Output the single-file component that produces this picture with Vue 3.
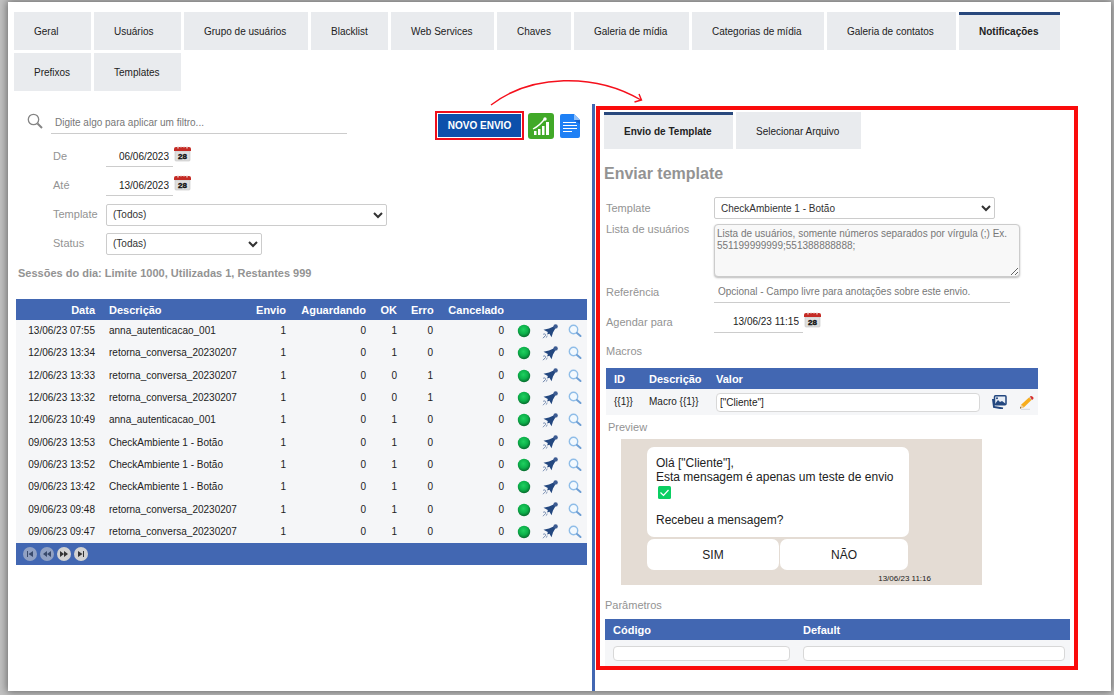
<script setup>
import { ref } from 'vue'

const tabs = [
  'Geral', 'Usuários', 'Grupo de usuários', 'Blacklist', 'Web Services', 'Chaves',
  'Galeria de mídia', 'Categorias de mídia', 'Galeria de contatos', 'Notificações',
  'Prefixos', 'Templates'
]
const activeTab = ref('Notificações')

const panelTabs = ['Envio de Template', 'Selecionar Arquivo']
const activePanelTab = ref('Envio de Template')

const filter = ref('')
const from = ref('06/06/2023')
const to = ref('13/06/2023')
const schedule = ref('13/06/23 11:15')
const macroValue = ref('["Cliente"]')
const macroId = '{{1}}'

const sessions = [
  ['13/06/23 07:55', 'anna_autenticacao_001', 1, 0, 1, 0, 0],
  ['12/06/23 13:34', 'retorna_conversa_20230207', 1, 0, 1, 0, 0],
  ['12/06/23 13:33', 'retorna_conversa_20230207', 1, 0, 0, 1, 0],
  ['12/06/23 13:32', 'retorna_conversa_20230207', 1, 0, 0, 1, 0],
  ['12/06/23 10:49', 'anna_autenticacao_001', 1, 0, 1, 0, 0],
  ['09/06/23 13:53', 'CheckAmbiente 1 - Botão', 1, 0, 1, 0, 0],
  ['09/06/23 13:52', 'CheckAmbiente 1 - Botão', 1, 0, 1, 0, 0],
  ['09/06/23 13:42', 'CheckAmbiente 1 - Botão', 1, 0, 1, 0, 0],
  ['09/06/23 09:48', 'retorna_conversa_20230207', 1, 0, 1, 0, 0],
  ['09/06/23 09:47', 'retorna_conversa_20230207', 1, 0, 1, 0, 0]
]

const pager = [
  { label: 'Primeira página', d: 'M4 4h1v6H4zM10 4v6L5.500 7z', off: true },
  { label: 'Página anterior', d: 'M7 4v6L3 7zM11 4v6L7 7z', off: true },
  { label: 'Próxima página', d: 'M3 4v6l4-3zM7 4v6l4-3z', off: false },
  { label: 'Última página', d: 'M4 4v6l4.500-3zM9 4h1v6H9z', off: false }
]
</script>

<template>
  <div class="page">
    <svg class="defs" width="0" height="0" aria-hidden="true">
      <defs>
        <radialGradient id="led" cx="45%" cy="38%" r="60%">
          <stop offset="0" stop-color="#20d060" /><stop offset="0.6" stop-color="#0cb04a" /><stop offset="1" stop-color="#087030" />
        </radialGradient>
        <symbol id="cal" viewBox="0 0 17 16">
          <path d="M1 5h15v9a1 1 0 0 1-1 1H2a1 1 0 0 1-1-1z" fill="#dedede" stroke="#c4c4c4" stroke-width=".6" />
          <path d="M0 5V3a2 2 0 0 1 2-2h13a2 2 0 0 1 2 2v2z" fill="#c52b25" />
          <path d="M4 .5v2M7 .5v1M10 .5v1M13 .5v2" stroke="#e8c8c4" stroke-width="1.4" />
          <text x="8.500" y="13" text-anchor="middle" font-family="Liberation Sans, sans-serif" font-size="8" font-weight="700" fill="#111" stroke="#111" stroke-width=".4">28</text>
        </symbol>
        <symbol id="rocket" viewBox="0 0 16 15">
          <path d="M1.500 5.800 7 4.500 12.200 2.300 13.700 3.800 11 8.500 9.500 13.200 7.500 9.800 5.200 10.500 5.800 8z" fill="#23477f" />
          <path d="m11 5 2-2" stroke="#23477f" stroke-width="2" />
          <circle cx="13.600" cy="2.400" r="2.200" fill="#3d5c92" />
          <path d="M1.200 10.300c1.500-1 3.300.2 2.200 1.500S1.600 13 1 14.200M5.500 12l-1.600 1.500" fill="none" stroke="#6b83aa" stroke-width="1" />
        </symbol>
        <symbol id="lens" viewBox="0 0 14 14">
          <circle cx="5.500" cy="5.500" r="4.200" fill="#f3f9fe" stroke="#8fbde8" stroke-width="1.400" />
          <path d="m9 9 3.500 3" stroke="#6f9fd4" stroke-width="2" stroke-linecap="round" />
        </symbol>
      </defs>
    </svg>

    <main class="sheet">
      <nav class="tabs" aria-label="Seções">
        <button v-for="t in tabs" :key="t" type="button" class="tab" :class="{ active: t === activeTab }" @click="activeTab = t">{{ t }}</button>
      </nav>

      <div class="columns">
        <section class="left">
          <div class="toolbar">
            <label class="search" for="filter" aria-label="Filtro">
              <svg width="17" height="17" viewBox="0 0 17 17" fill="none" stroke="#858585">
                <circle cx="6.500" cy="6.500" r="5.200" stroke-width="1.300" /><path d="m10.500 10.500 4.500 4.500" stroke-width="2" />
              </svg>
            </label>
            <input id="filter" v-model="filter" class="line filter" type="text" placeholder="Digite algo para aplicar um filtro...">
            <button type="button" class="new">NOVO ENVIO</button>
            <button type="button" class="icon" aria-label="Estatísticas">
              <svg width="26" height="26" viewBox="0 0 26 26">
                <rect width="26" height="26" rx="3" fill="#41a928" />
                <path d="M6 18h2.500v4H6zM10 16h2.500v6H10zM14 13h2.500v9H14zM18 9h3v13h-3z" fill="#fff" />
                <path d="M5 16C9 14 13 11 17 5.500" fill="none" stroke="#fff" stroke-width="1.300" /><circle cx="17" cy="6" r="1.700" fill="#fff" />
              </svg>
            </button>
            <button type="button" class="icon" aria-label="Relatório">
              <svg width="20" height="24" viewBox="0 0 20 24">
                <path d="M2 0h12l6 6v16a2 2 0 0 1-2 2H2a2 2 0 0 1-2-2V2a2 2 0 0 1 2-2z" fill="#1e80f5" />
                <path d="M14 0v6h6z" fill="#8fc0fa" /><path d="m14 6 6 4V6z" fill="#1763cc" />
                <path d="M3 8.500h13M3 11.500h14M3 14.500h14M3 17.500h9" stroke="#fff" stroke-width="1.200" />
              </svg>
            </button>
          </div>

          <form class="filters" @submit.prevent>
            <label for="from">De</label>
            <div class="date">
              <input id="from" v-model="from" class="line" type="text">
              <button type="button" class="icon" aria-label="Calendário"><svg width="17" height="16"><use href="#cal" /></svg></button>
            </div>
            <label for="to">Até</label>
            <div class="date">
              <input id="to" v-model="to" class="line" type="text">
              <button type="button" class="icon" aria-label="Calendário"><svg width="17" height="16"><use href="#cal" /></svg></button>
            </div>
            <label for="tpl">Template</label>
            <select id="tpl" class="wide"><option>(Todos)</option></select>
            <label for="status">Status</label>
            <select id="status" class="short"><option>(Todas)</option></select>
          </form>

          <p class="quota">Sessões do dia: Limite 1000, Utilizadas 1, Restantes 999</p>

          <table class="sessions">
            <colgroup>
              <col class="c-date"><col class="c-desc"><col class="c-sent"><col class="c-wait"><col class="c-ok"><col class="c-err"><col class="c-cancel"><col class="c-icon"><col class="c-icon"><col class="c-last">
            </colgroup>
            <thead>
              <tr>
                <th>Data</th><th class="start">Descrição</th><th>Envio</th><th>Aguardando</th><th>OK</th><th>Erro</th><th>Cancelado</th><td class="pic" /><td class="pic" /><td class="pic" />
              </tr>
            </thead>
            <tbody>
              <tr v-for="row in sessions" :key="row[0]">
                <td v-for="(cell, i) in row" :key="i" :class="{ start: i === 1 }">{{ cell }}</td>
                <td class="pic"><svg width="14" height="14" viewBox="0 0 14 14"><circle cx="7" cy="7" r="6.200" fill="url(#led)" /></svg></td>
                <td class="pic"><button type="button" class="icon" aria-label="Enviar"><svg width="16" height="15"><use href="#rocket" /></svg></button></td>
                <td class="pic"><button type="button" class="icon" aria-label="Detalhes"><svg width="14" height="14"><use href="#lens" /></svg></button></td>
              </tr>
            </tbody>
            <tfoot>
              <tr>
                <td colspan="10">
                  <div class="pager">
                    <button v-for="p in pager" :key="p.label" type="button" class="page-btn" :class="{ off: p.off }" :aria-label="p.label">
                      <svg width="14" height="14" viewBox="0 0 14 14"><path :d="p.d" fill="#333" /></svg>
                    </button>
                  </div>
                </td>
              </tr>
            </tfoot>
          </table>
        </section>

        <section class="right">
          <div class="panel">
            <nav class="panel-tabs" aria-label="Tipo de envio">
              <button v-for="t in panelTabs" :key="t" type="button" class="tab" :class="{ active: t === activePanelTab }" @click="activePanelTab = t">{{ t }}</button>
            </nav>
            <h1>Enviar template</h1>

            <form class="send" @submit.prevent>
              <label for="send-tpl">Template</label>
              <select id="send-tpl" class="wide"><option>CheckAmbiente 1 - Botão</option></select>
              <label for="users" class="top">Lista de usuários</label>
              <textarea id="users" placeholder="Lista de usuários, somente números separados por vírgula (;) Ex. 551199999999;551388888888;" />
              <label for="reference">Referência</label>
              <input id="reference" class="line reference" type="text" placeholder="Opcional - Campo livre para anotações sobre este envio.">
              <label for="schedule">Agendar para</label>
              <div class="date schedule">
                <input id="schedule" v-model="schedule" class="line" type="text">
                <button type="button" class="icon" aria-label="Calendário"><svg width="17" height="16"><use href="#cal" /></svg></button>
              </div>
            </form>

            <h2 class="macros-title">Macros</h2>
            <table class="macros">
              <colgroup><col class="m-id"><col class="m-desc"><col><col class="m-icons"></colgroup>
              <thead><tr><th>ID</th><th>Descrição</th><th>Valor</th><td /></tr></thead>
              <tbody>
                <tr>
                  <td>{{ macroId }}</td>
                  <td>Macro {{ macroId }}</td>
                  <td><input v-model="macroValue" class="box" type="text" aria-label="Valor"></td>
                  <td>
                    <div class="actions">
                      <button type="button" class="icon" aria-label="Imagem">
                        <svg width="15" height="14" viewBox="0 0 15 14">
                          <path d="m1 4 1 8 9 1.500" fill="none" stroke="#23477f" stroke-width="2" />
                          <rect x="2.500" y=".8" width="11.500" height="9" rx="1" fill="#e8eef6" stroke="#23477f" stroke-width="1.500" />
                          <path d="m3 9 3-4 2 2 2-1 4 3v1H3z" fill="#23477f" /><circle cx="5" cy="3.300" r="1" fill="#23477f" />
                        </svg>
                      </button>
                      <button type="button" class="icon" aria-label="Editar">
                        <svg width="15" height="15" viewBox="0 0 15 15">
                          <path d="M2 14.300h9" stroke="#d3d6da" />
                          <path d="m1 13.500 1.300-4L10.500 2 13 4.500 5 12.300z" fill="#f7ad1c" />
                          <path d="m2.300 9.500 2.700 2.800-4 1.200z" fill="#f1cf9c" /><path d="m1 13.500.4-1.400 1 1z" fill="#333" />
                          <path d="M10 2.500 11.500 1l2.700 2.500L12.500 5z" fill="#cbd0d6" />
                          <path d="M11 1.500c1-1.500 4.500.5 3.200 2.500L13 5z" fill="#d8302b" />
                        </svg>
                      </button>
                    </div>
                  </td>
                </tr>
              </tbody>
            </table>

            <h2 class="preview-title">Preview</h2>
            <div class="preview">
              <div class="bubble">
                Olá ["Cliente"],<br>Esta mensagem é apenas um teste de envio
                <svg class="check" width="13" height="13" viewBox="0 0 13 13" role="img" aria-label="ok">
                  <rect width="13" height="13" rx="1.500" fill="#0bcf63" /><path d="m2.500 6.500 3 3 5-5.500" fill="none" stroke="#fff" stroke-width="1.200" />
                </svg>
                <p>Recebeu a mensagem?</p>
              </div>
              <div class="replies">
                <button type="button">SIM</button>
                <button type="button">NÃO</button>
              </div>
              <time>13/06/23 11:16</time>
            </div>

            <h2 class="params-title">Parâmetros</h2>
            <table class="params">
              <colgroup><col class="p-code"><col></colgroup>
              <thead><tr><th>Código</th><th>Default</th></tr></thead>
              <tbody>
                <tr>
                  <td><input class="box code" type="text" aria-label="Código"></td>
                  <td><input class="box" type="text" aria-label="Default"></td>
                </tr>
              </tbody>
            </table>
          </div>
        </section>
      </div>

      <svg class="arrow" width="156" height="30" viewBox="0 0 156 30" fill="none" stroke="#f5101c" stroke-width="1.400" aria-hidden="true">
        <path d="M3 28C43-3 107-4 153 23M151 17l2.500 6-7 2" />
      </svg>
    </main>
  </div>
</template>

<style>
body {
  margin: 0;
  background: #c2c2c2;
}
</style>

<style scoped>
* {
  box-sizing: border-box;
}

.page {
  display: flex;
  min-height: 100vh;
  padding: 2px 3px 4px 8px;
  font: 10px/12px "Liberation Sans", Arial, sans-serif;
  color: #222;
}

.defs {
  position: absolute;
}

.sheet {
  position: relative;
  flex: 1;
  display: flex;
  flex-direction: column;
  padding: 10px 6px 0;
  background: #fff;
  box-shadow: 0 0 8px 1px #666;
}

button,
input,
select,
textarea {
  margin: 0;
  font: inherit;
  color: inherit;
}

button {
  cursor: pointer;
}

.tabs {
  display: grid;
  grid-template-columns: 77px 87px 124px 77px 103px 74px 115px 132px 129px 101px;
  grid-auto-rows: 38px;
  gap: 3px;
}

.tab {
  padding: 0 0 0 20px;
  border: 0;
  border-top: 3px solid #e9ebee;
  border-bottom: 1px solid #e9ebee;
  background: #e9ebee;
  text-align: left;
  white-space: nowrap;
}

.tab.active {
  border-top-color: #29487d;
  font-weight: 700;
}

.columns {
  flex: 1;
  display: flex;
  margin-top: 13px;
}

.left {
  flex: 0 1 578px;
  padding: 7px 5px 0 2px;
}

.right {
  flex: 1;
  padding: 2px 27px 0 1px;
  border-left: 3px solid #4267b2;
}

.toolbar {
  display: flex;
  align-items: center;
  height: 29px;
}

.search {
  width: 35px;
  height: 25px;
  padding-left: 11px;
}

.line {
  padding: 0 4px;
  border: 0;
  border-bottom: 1px solid #ccc;
  outline: 0;
  background: none;
}

.line::placeholder,
textarea::placeholder {
  color: #777;
}

.filter {
  align-self: flex-start;
  width: 296px;
  height: 23px;
}

.icon {
  display: inline-flex;
  padding: 0;
  border: 0;
  background: none;
}

.new {
  width: 89px;
  height: 29px;
  margin: 0 4px 0 88px;
  padding: 0;
  border: 2px solid #f00f1a;
  background: #0d50ab;
  box-shadow: inset 0 0 0 1px #fff;
  color: #fff;
  font-weight: 700;
}

.toolbar .icon + .icon {
  margin-left: 6px;
}

.filters {
  display: grid;
  grid-template-columns: 53px 1fr;
  grid-auto-rows: 29px;
  align-items: center;
  padding: 2px 0 0 37px;
}

.filters label,
.send label,
h2 {
  font-size: 11px;
  line-height: 13px;
  font-weight: 400;
  color: #939393;
}

.date {
  display: flex;
  align-items: flex-start;
  gap: 1px;
}

.date .line {
  width: 67px;
  height: 21px;
  text-align: right;
}

select {
  height: 22px;
  padding: 0 2px;
  border: 1px solid #ccc;
  border-radius: 2px;
  background: #fff;
  color: #333;
}

.wide {
  width: 281px;
}

.short {
  width: 156px;
}

.quota {
  margin: 9px 0 19px 2px;
  font-size: 11px;
  line-height: 13px;
  font-weight: 700;
  color: #939393;
}

table {
  width: 100%;
  border-collapse: collapse;
  table-layout: fixed;
  background: #f5f6f8;
}

th,
td {
  padding: 0 7px;
  white-space: nowrap;
  text-align: left;
}

th {
  font-size: 11px;
  color: #fff;
}

thead tr {
  height: 21px;
  background: #4267b2;
}

.sessions {
  height: 266px;
}

.sessions th,
.sessions td {
  text-align: right;
}

.sessions .start,
.sessions tfoot td {
  text-align: left;
}

.sessions tbody tr {
  height: 22px;
}

.sessions .pic {
  padding: 0;
  text-align: center;
}

.pic svg {
  display: block;
  margin: auto;
}

.pic .icon {
  vertical-align: middle;
}

.c-date { width: 86px; }
.c-desc { width: 146px; }
.c-sent { width: 45px; }
.c-wait { width: 80px; }
.c-ok { width: 31px; }
.c-err { width: 36px; }
.c-cancel { width: 71px; }
.c-icon { width: 26px; }
.c-last { width: 24px; }

tfoot tr {
  height: 22px;
  background: #4267b2;
}

.pager {
  display: flex;
  gap: 3px;
}

.page-btn {
  display: flex;
  padding: 0;
  border: 0;
  border-radius: 7px;
  background: #d2d2d2;
}

.page-btn.off {
  opacity: 0.55;
}

.panel {
  padding: 2px 4px 0;
  border: 4px solid #fa0b0b;
}

.panel-tabs {
  display: grid;
  grid-template-columns: 129px 125px;
  grid-auto-rows: 37px;
  gap: 3px;
}

h1 {
  margin: 15px 0 13px;
  font-size: 16px;
  line-height: 20px;
  color: #939393;
}

h2 {
  margin: 0;
}

.send {
  display: grid;
  grid-template-columns: 108px 1fr;
  grid-template-rows: 22px 54px 22px 30px;
  row-gap: 4px;
  align-items: center;
  padding-left: 2px;
}

.send .top {
  align-self: start;
}

textarea {
  width: 306px;
  height: 53px;
  padding: 3px 2px;
  border: 1px solid #ccc;
  border-radius: 4px;
  background: #f8f8f8;
  box-shadow: 0 1px 2px #bbb;
}

.reference {
  width: 296px;
  height: 22px;
}

.schedule .line {
  width: 89px;
}

.macros-title {
  margin: 8px 0 10px 2px;
}

.macros {
  width: 432px;
  margin-left: 2px;
}

.macros tbody tr,
.params tbody tr {
  height: 26px;
}

.m-id { width: 35px; }
.m-desc { width: 67px; }
.m-icons { width: 58px; }

.macros th,
.macros td {
  padding: 0 0 0 8px;
}

.box {
  display: block;
  width: 100%;
  height: 19px;
  padding: 0 3px;
  border: 1px solid #d8d8d8;
  border-radius: 4px;
  background: #fff;
}

.actions {
  display: flex;
  gap: 12px;
  padding-left: 4px;
}

.preview-title {
  margin: 6px 0 5px 4px;
}

.preview {
  width: 361px;
  height: 146px;
  margin-left: 17px;
  padding: 8px 51px 0 26px;
  background: #e4dcd4;
}

.bubble {
  width: 262px;
  height: 90px;
  padding: 9px;
  border-radius: 7px;
  background: #fff;
  font-size: 12px;
  line-height: 14px;
}

.check {
  display: block;
  margin: 2px;
}

.bubble p {
  margin: 14px 0 0;
}

.replies {
  display: grid;
  grid-template-columns: 132px 128px;
  gap: 1px;
  margin-top: 2px;
}

.replies button {
  height: 31px;
  padding: 0;
  border: 0;
  border-radius: 7px;
  background: #fff;
  font-size: 12px;
}

time {
  display: block;
  margin-top: 4px;
  font-size: 8px;
  line-height: 10px;
  text-align: right;
}

.params-title {
  margin: 14px 0 7px 1px;
}

.params {
  width: 465px;
  margin-left: 1px;
}

.params th,
.params td {
  padding: 0 5px 0 8px;
}

.params .box {
  height: 15px;
}

.p-code { width: 190px; }

.arrow {
  position: absolute;
  top: 75px;
  left: 480px;
}
</style>
